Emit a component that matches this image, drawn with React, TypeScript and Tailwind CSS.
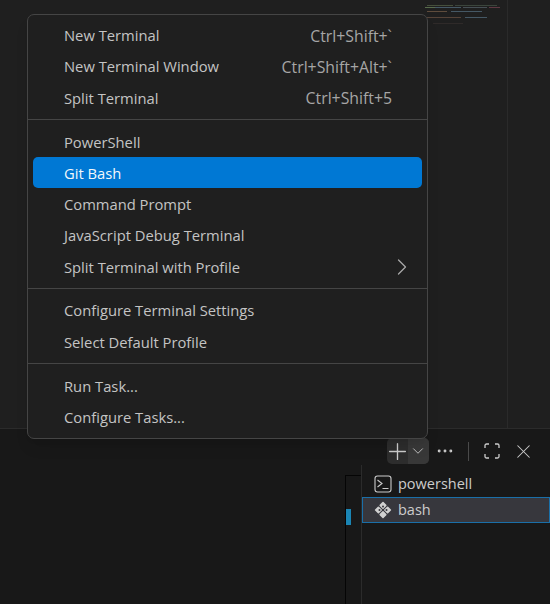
import { ChevronDown, ChevronRight, Ellipsis, Plus, X } from "lucide-react";

const groups = [
  [
    { label: "New Terminal", keys: "Ctrl+Shift+`" },
    { label: "New Terminal Window", keys: "Ctrl+Shift+Alt+`" },
    { label: "Split Terminal", keys: "Ctrl+Shift+5" },
  ],
  [
    { label: "PowerShell" },
    { label: "Git Bash", active: true },
    { label: "Command Prompt" },
    { label: "JavaScript Debug Terminal" },
    { label: "Split Terminal with Profile", more: true },
  ],
  [{ label: "Configure Terminal Settings" }, { label: "Select Default Profile" }],
  [{ label: "Run Task..." }, { label: "Configure Tasks..." }],
];

type Item = { label: string; keys?: string; active?: boolean; more?: boolean };

function MenuRow({ item }: { item: Item }) {
  return (
    <div
      className={
        item.active
          ? "flex h-[31.25px] items-center justify-between rounded-[5px] bg-[#0078d4] pl-[31px] pr-[30px] text-[#f2f7fb]"
          : "flex h-[31.25px] items-center justify-between pl-[31px] pr-[30px] text-[#c4c4c4]"
      }
    >
      <span>{item.label}</span>
      {item.keys && <span className="pt-[2px] text-[15.8px] leading-[21px] text-[#a6a6a6]">{item.keys}</span>}
      {item.more && <ChevronRight size={28} strokeWidth={1.1} className="-mr-[24px] shrink-0 text-[#a8a8a8]" />}
    </div>
  );
}

function Minimap() {
  return (
    <svg width="82" height="30" viewBox="0 0 82 30" className="ml-[425px] shrink-0" strokeWidth="1" opacity="0.6">
      <path d="M2 5.5h26" stroke="#5f7050" />
      <path d="M30 5.5h42" stroke="#4f5f50" />
      <path d="M0 7.5h10" stroke="#7f9f6a" />
      <path d="M10 7.5h26" stroke="#5f7f95" />
      <path d="M38 7.5h24" stroke="#607078" />
      <path d="M64 7.5h11" stroke="#8a4b5c" />
      <path d="M2 11.5h20" stroke="#8a6a50" />
      <path d="M26 11.5h31" stroke="#5f7f95" />
      <path d="M2 17.5h34" stroke="#7a5c4a" />
      <path d="M40 17.5h22" stroke="#5f7f95" />
      <path d="M8 23.5h30" stroke="#3a3230" />
    </svg>
  );
}

export default function App() {
  return (
    <div className="relative flex h-[604px] w-[550px] flex-col overflow-hidden bg-[#181818] font-['Open_Sans',sans-serif] text-[14.75px]">
      <div className="h-[429px] border-b border-[#2b2b2b] bg-[#1f1f1f]">
        <div className="flex h-full">
          <Minimap />
          <div className="h-full border-l border-[#2a2a2a]" />
        </div>
      </div>

      <div className="flex items-center justify-end pb-px pr-[15.5px] pt-[9px] text-[#cccccc]">
        <div className="flex h-[26px] w-[42px] items-center overflow-hidden rounded-[5px] bg-[#2d2d2d]">
          <span className="flex h-full w-[21px] items-center justify-center">
            <Plus size={27} strokeWidth={1.2} className="shrink-0" />
          </span>
          <span className="flex h-full w-[21px] items-center justify-center bg-[#383838]">
            <ChevronDown size={18} strokeWidth={1.2} className="shrink-0" />
          </span>
        </div>
        <Ellipsis size={20} strokeWidth={1.5} className="ml-[6.5px]" />
        <div className="ml-[12.5px] mr-[13.5px] h-[19px] w-px bg-[#4a4a4a]" />
        <svg width="20" height="20" viewBox="0 0 20 20" fill="none" stroke="#cccccc" strokeWidth="1.3">
          <path d="M3 7V4.5A1.5 1.5 0 0 1 4.5 3H7M13 3h2.5A1.5 1.5 0 0 1 17 4.5V7M17 13v2.500A1.5 1.5 0 0 1 15.500 17H13M7 17H4.500A1.5 1.5 0 0 1 3 15.500V13" />
        </svg>
        <X size={23} strokeWidth={1.1} className="ml-[9.5px]" />
      </div>

      <div className="flex flex-1 pl-[345px]">
        <div className="mt-[10px] h-full w-[16px] border-l border-t border-[#050505]">
          <div className="mt-[33px] h-[16px] w-[5px] bg-[#1a85b4]" />
        </div>
        <div className="flex-1 border-l border-[#2b2b2b] pt-[6px] text-[14.5px] text-[#cccccc]">
          <div className="flex h-[26px] items-center pl-[12px]">
            <svg width="18" height="18" viewBox="0 0 18 18" fill="none" stroke="#cccccc" strokeWidth="1.1" className="mr-[6px]">
              <rect x="1" y="1" width="16" height="16" rx="2.5" />
              <path d="M3.5 5l4.500 3.500-4.500 3.500M8.500 13.500h6" />
            </svg>
            powershell
          </div>
          <div className="flex h-[26px] items-center border border-[#1a6fa8] bg-[#37373d] pl-[11px]">
            <svg width="18" height="18" viewBox="0 0 18 18" className="mr-[6px]">
              <g transform="rotate(45 9 9)" fill="#d0d0d0">
                <rect x="3" y="3" width="5.500" height="5.500" rx="0.8" />
                <rect x="9.500" y="3" width="5.500" height="5.500" rx="0.8" />
                <rect x="3" y="9.500" width="5.500" height="5.500" rx="0.8" />
                <rect x="9.500" y="9.500" width="5.500" height="5.500" rx="0.8" />
              </g>
              <circle cx="9" cy="5.500" r="1" fill="#37373d" />
              <circle cx="12.500" cy="9" r="1" fill="#37373d" />
              <circle cx="5.500" cy="9" r="1" fill="#37373d" />
            </svg>
            bash
          </div>
        </div>
      </div>

      <div className="absolute left-[27px] top-[14px] h-[425px] w-[401px] rounded-[7px] border border-[#454545] bg-[#1f1f1f] py-[4.500px] shadow-lg">
        {groups.map((group, i) => (
          <div key={i}>
            {i > 0 && <div className="my-[5.850px] h-px bg-[#454545]" />}
            <div className="px-[5px]">
              {group.map((item) => (
                <MenuRow key={item.label} item={item} />
              ))}
            </div>
          </div>
        ))}
      </div>
    </div>
  );
}
